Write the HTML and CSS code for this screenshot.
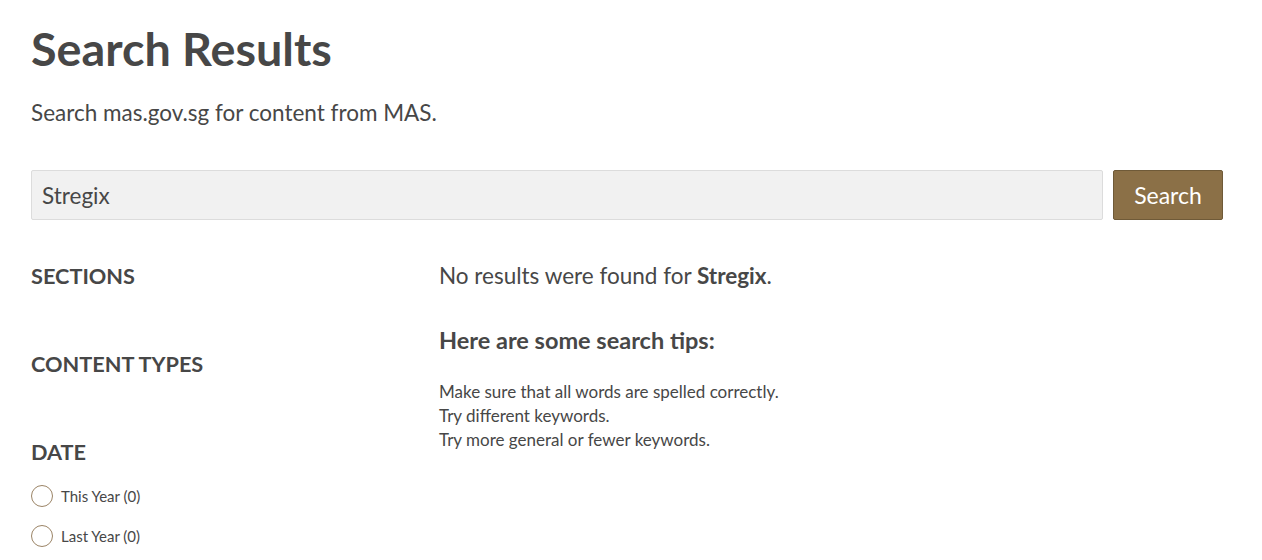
FILE: index.html
```html
<!DOCTYPE html>
<html>
<head>
    <title>Search Results</title>
    <meta name="viewport" content="width=device-width, initial-scale=1">
    <link rel="stylesheet" href="styles.css">
</head>
<body>
    <div class="page">
        <h1 class="title">Search Results</h1>
        <p class="intro">Search mas.gov.sg for content from MAS.</p>

        <form class="search-bar">
            <input type="text" class="search-input" value="Stregix" />
            <button type="button" class="search-button">Search</button>
        </form>

        <div class="results">
            <aside class="filters">
                <h3 class="filter-title">SECTIONS</h3>
                <h3 class="filter-title">CONTENT TYPES</h3>
                <h3 class="filter-title">DATE</h3>
                <label class="radio"><span class="radio-dot"></span>This Year (0)</label>
                <label class="radio"><span class="radio-dot"></span>Last Year (0)</label>
            </aside>

            <main class="content">
                <p class="no-results">No results were found for <strong>Stregix</strong>.</p>
                <h3 class="tips-title">Here are some search tips:</h3>
                <ul class="tips">
                    <li>Make sure that all words are spelled correctly.</li>
                    <li>Try different keywords.</li>
                    <li>Try more general or fewer keywords.</li>
                </ul>
            </main>
        </div>
    </div>
</body>
</html>
```

FILE: styles.css
```css
body {
    margin: 0;
    font-family: Lato, "Liberation Sans", sans-serif;
    color: #474747;
    background: #fff;
}
.page {
    padding: 0 39px 0 31px;
}
.title {
    margin: 0;
    padding-top: 20px;
    font-size: 46.7px;
    line-height: 56px;
    font-weight: 700;
}
.intro {
    margin: 22px 0 0;
    font-size: 22.5px;
    line-height: 30px;
}
.search-bar {
    display: flex;
    gap: 10px;
    margin-top: 42px;
}
.search-input {
    flex: 1;
    height: 50px;
    box-sizing: border-box;
    padding: 0 10px;
    background: #f1f1f1;
    border: 1px solid #dcdcdc;
    border-radius: 2px;
    font-family: inherit;
    font-size: 22.5px;
    color: #474747;
}
.search-button {
    width: 110px;
    height: 50px;
    background-color: #8b7047;
    border: 1px solid #6f5a38;
    border-radius: 2px;
    color: white;
    font-family: inherit;
    font-size: 23px;
}
.results {
    display: grid;
    grid-template-columns: 408px 1fr;
    margin-top: 44px;
}
.filter-title {
    margin: 0 0 64px;
    font-size: 21.7px;
    line-height: 24px;
    font-weight: 700;
}
.filter-title:last-of-type {
    margin-bottom: 21px;
}
.radio {
    display: flex;
    align-items: center;
    gap: 8px;
    height: 22px;
    margin-bottom: 18px;
    font-size: 15px;
}
.radio-dot {
    width: 20px;
    height: 20px;
    border: 1px solid #9b8466;
    border-radius: 50%;
}
.no-results {
    margin: 0;
    font-size: 22.5px;
    line-height: 24px;
}
.tips-title {
    margin: 40px 0 0;
    font-size: 23.5px;
    line-height: 24px;
    font-weight: 700;
}
.tips {
    list-style: none;
    margin: 28px 0 0;
    padding: 0;
    font-size: 17px;
    line-height: 24px;
}
```
